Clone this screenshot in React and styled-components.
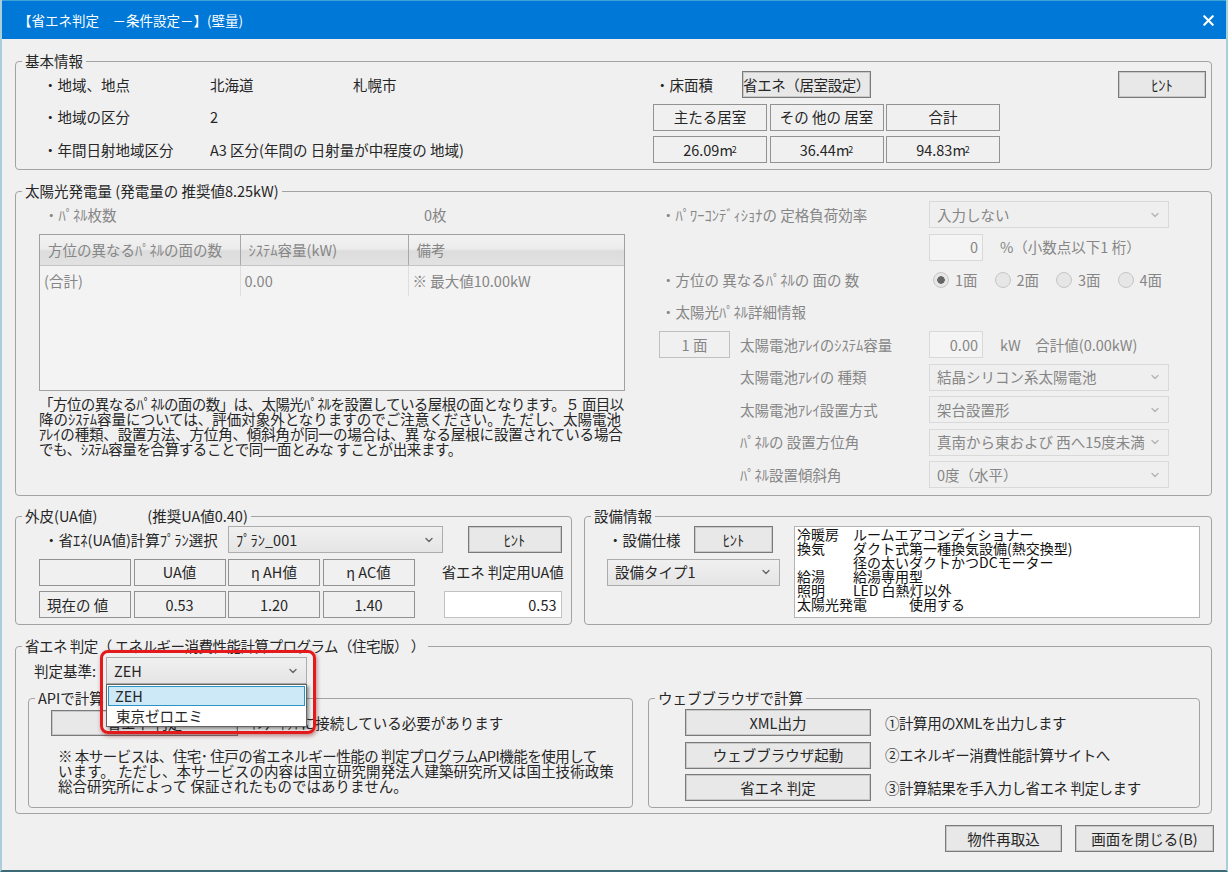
import React from 'react';
import styled, { createGlobalStyle } from 'styled-components';
import { ChevronDown, X } from 'lucide-react';

const GlobalStyle = createGlobalStyle`
	html, body {
		margin: 0;
		padding: 0;
		background: #f0f0f0;
	}
	* {
		box-sizing: border-box;
	}
`;

const Window = styled.div`
	width: 1228px;
	height: 872px;
	overflow: hidden;
	display: flex;
	flex-direction: column;
	background: #f0f0f0;
	color: #262626;
	font-family: 'Noto Sans CJK JP', 'Liberation Sans', sans-serif;
	font-size: 14.5px;
	line-height: 16px;
	border-left: 2px solid #a9d0d8;
	border-right: 2px solid #a9d0d8;
	border-bottom: 2px solid #3b6a75;
`;

const TitleBar = styled.header`
	flex: none;
	height: 39px;
	margin: 0 -2px;
	padding: 0 11px 0 18px;
	display: flex;
	align-items: center;
	justify-content: space-between;
	background: #0078d7;
	border-top: 1px solid #3fa3d8;
	color: #fff;
	font-size: 13.5px;
`;

const Body = styled.main`
	flex: 1;
	padding: 14px 14px 0 13px;
	display: flex;
	flex-direction: column;
`;

const Group = styled.fieldset`
	margin: ${(p) => p.$mt || 0}px 0 0 0;
	padding: 0;
	min-width: 0;
	height: ${(p) => p.$h}px;
	flex: ${(p) => (p.$w ? `0 0 ${p.$w}px` : '1 1 0')};
	border: 1px solid #a3a3a3;
	border-radius: 4px;
	legend {
		margin-left: 6px;
		padding: 0 3px;
		height: 16px;
		white-space: pre;
		color: #262626;
		letter-spacing: ${(p) => p.$ls || 0}px;
	}
`;

const Section = styled(Group)`
	flex: none;
`;

const Row = styled.div`
	display: flex;
	margin-top: ${(p) => p.$mt || 0}px;
	gap: ${(p) => p.$gap || 0}px;
	align-items: ${(p) => p.$align || 'stretch'};
`;

const Basic = styled.div`
	display: flex;
	padding: 2px 5px 0 27px;
`;

const InfoList = styled.div`
	width: 610px;
	display: grid;
	grid-template-columns: 167px 143px 1fr;
	grid-auto-rows: 27px;
	row-gap: 5.5px;
	align-items: center;
	div:nth-child(n + 6) {
		white-space: nowrap;
	}
`;

const AreaPanel = styled.div`
	width: 347px;
	display: grid;
	grid-template-columns: repeat(3, 114px);
	grid-auto-rows: 27px;
	column-gap: 2.5px;
	row-gap: 5.5px;
`;

const AreaHead = styled.div`
	grid-column: 1 / -1;
	display: grid;
	grid-template-columns: 89px 129px;
	align-items: center;
	span {
		margin-left: 2px;
	}
`;

const Cell = styled.div`
	display: flex;
	align-items: center;
	justify-content: ${(p) => (p.$left ? 'flex-start' : 'center')};
	padding: ${(p) => (p.$left ? '0 7px' : '0')};
	width: ${(p) => (p.$w ? `${p.$w}px` : 'auto')};
	height: 27px;
	background: #f0f0f0;
	border: 1px solid ${(p) => (p.$off ? '#c0c0c0' : '#929292')};
	white-space: nowrap;
	sup {
		font-size: 9px;
		line-height: 0;
		margin-left: -1px;
	}
`;

const Button = styled.button`
	flex: none;
	width: ${(p) => p.$w}px;
	height: ${(p) => p.$h || 27}px;
	margin: 0 0 0 ${(p) => p.$ml || 0}px;
	padding: 0;
	background: #e8e8e8;
	border: 1px solid #7a7a7a;
	box-shadow: inset 0 0 0 1px #c8c8c8;
	color: #262626;
	font: inherit;
	letter-spacing: ${(p) => p.$ls || 0}px;
	white-space: nowrap;
`;

const Solar = styled.div`
	display: flex;
	padding: 2px 0 0 23px;
	color: #868686;
`;

const SolarLeft = styled.div`
	width: 586px;
`;

const PanelCount = styled.div`
	height: 27px;
	display: grid;
	grid-template-columns: 380px 1fr;
	align-items: center;
	padding-left: 5px;
	span:last-child {
		white-space: nowrap;
	}
`;

const TableBox = styled.div`
	margin-top: 6px;
	height: 157px;
	background: #f3f3f3;
	border: 1px solid #a0a0a0;
`;

const PanelTable = styled.table`
	width: 100%;
	table-layout: fixed;
	border-collapse: collapse;
	th {
		height: 30px;
		padding: 0 0 0 8px;
		text-align: left;
		font-weight: 400;
		white-space: nowrap;
		background: linear-gradient(#f2f2f2 0%, #ececec 45%, #dcdcdc 55%, #e2e2e2 100%);
		border-right: 1px solid #a8a8a8;
		border-bottom: 1px solid #c4c4c4;
	}
	th:last-child,
	td:last-child {
		border-right: 0;
	}
	td {
		height: 31px;
		padding: 0 0 0 4px;
		white-space: nowrap;
		border-right: 1px solid #dedede;
	}
`;

const Note = styled.p`
	margin: ${(p) => p.$mt || 5}px 0 0 ${(p) => p.$ml || 0}px;
	line-height: 15px;
	color: #262626;
	white-space: nowrap;
`;

const NoteLine = styled.span`
	display: block;
	letter-spacing: ${(p) => p.$ls || 0}px;
`;

const SolarRight = styled.div`
	margin-left: 34px;
	display: grid;
	grid-template-columns: 81px 189px 240px;
	grid-auto-rows: 27px;
	row-gap: 5.5px;
	align-items: center;
`;

const FieldLabel = styled.div`
	grid-column: ${(p) => (p.$wide ? '1 / 3' : '2')};
	padding-left: ${(p) => (p.$wide ? 2 : 0)}px;
	white-space: nowrap;
`;

const Combo = styled.div`
	position: relative;
	display: flex;
	align-items: center;
	justify-content: space-between;
	width: ${(p) => (p.$w ? `${p.$w}px` : 'auto')};
	height: 27px;
	padding: 0 7px 0 7px;
	white-space: nowrap;
	color: ${(p) => (p.$off ? '#868686' : '#262626')};
	background: ${(p) => (p.$off ? '#efefef' : 'linear-gradient(#f0f0f0, #e5e5e5)')};
	border: 1px solid ${(p) => (p.$off ? '#d9d9d9' : '#acacac')};
	svg {
		flex: none;
		color: ${(p) => (p.$off ? '#b5b5b5' : '#666')};
	}
`;

const Input = styled.div`
	flex: none;
	width: ${(p) => p.$w}px;
	height: 27px;
	padding: 0 ${(p) => p.$pr || 4}px 0 0;
	display: flex;
	align-items: center;
	justify-content: flex-end;
	background: ${(p) => (p.$off ? '#f4f4f4' : '#fff')};
	border: 1px solid ${(p) => (p.$off ? '#d9d9d9' : '#c2c2c2')};
	color: ${(p) => (p.$off ? '#868686' : '#262626')};
`;

const InputRow = styled.div`
	display: flex;
	align-items: center;
	gap: 17px;
	white-space: nowrap;
`;

const Radios = styled.div`
	display: grid;
	grid-template-columns: repeat(4, 61.5px);
	padding-left: 4px;
`;

const Radio = styled.span`
	display: flex;
	align-items: center;
	gap: 6px;
	white-space: nowrap;
	&::before {
		content: '';
		flex: none;
		width: 14px;
		height: 14px;
		border-radius: 50%;
		border: 1px solid #c6c6c6;
		background: ${(p) =>
			p.$on ? 'radial-gradient(circle, #666 0 3.5px, #e6e6e6 4px)' : '#e6e6e6'};
	}
`;

const Envelope = styled.div`
	padding: 2px 8px 0 23px;
	display: grid;
	grid-template-columns: 92px 92px 92px 92px 24px 118px;
	grid-template-rows: 27px 27px 27px;
	column-gap: 2.5px;
	row-gap: 5.5px;
	align-items: center;
`;

const Lead = styled.div`
	grid-column: 1 / 3;
	padding-left: 5px;
	white-space: nowrap;
`;

const PlanCombo = styled(Combo)`
	grid-column: 3 / 5;
	margin-right: -28px;
`;

const HintSlot = styled.div`
	grid-column: 5 / 7;
	display: flex;
	justify-content: flex-end;
`;

const JudgeLabel = styled.div`
	grid-column: 5 / 7;
	justify-self: end;
	margin-right: -2px;
	white-space: nowrap;
	letter-spacing: -0.2px;
`;

const InputSlot = styled.div`
	grid-column: 6;
	justify-self: start;
`;

const Equipment = styled.div`
	display: flex;
	padding: 2px 0 0 22px;
	gap: 14px;
`;

const EquipmentLeft = styled.div`
	width: 173px;
	display: flex;
	flex-direction: column;
	gap: 5.5px;
`;

const EquipmentHead = styled.div`
	display: flex;
	align-items: center;
	padding-left: 1px;
	justify-content: space-between;
	margin-right: 7px;
`;

const EquipmentText = styled.div`
	width: 406px;
	height: 92px;
	padding: 0 2px;
	background: #fff;
	border: 1px solid #b4b4b4;
	font-size: 14px;
	line-height: 14px;
	white-space: pre;
	color: #111;
`;

const Judge = styled.div`
	padding: 0 11px 0 12px;
	position: relative;
`;

const JudgeHead = styled.div`
	display: flex;
	align-items: center;
	height: 27px;
	margin-top: 3px;
	padding-left: 6px;
	gap: 10px;
	white-space: nowrap;
`;

const ComboAnchor = styled.div`
	position: relative;
	z-index: 2;
`;

const Highlight = styled.div`
	position: absolute;
	top: -7px;
	left: -6px;
	width: 216px;
	height: 84px;
	border: 3px solid #e3191c;
	border-radius: 8px;
	box-shadow: 1px 2px 4px rgba(120, 0, 0, 0.45);
	pointer-events: none;
`;

const DropList = styled.ul`
	position: absolute;
	top: 27px;
	left: 0;
	width: 201px;
	height: 43px;
	margin: 0;
	padding: 1px;
	list-style: none;
	background: #fff;
	border: 1px solid #646464;
	box-shadow: 2px 2px 3px rgba(0, 0, 0, 0.4);
`;

const DropItem = styled.li`
	height: 20px;
	padding: 0 ${(p) => (p.$active ? 6 : 7)}px;
	line-height: 18px;
	background: ${(p) => (p.$active ? '#cde8f6' : 'transparent')};
	border: 1px solid ${(p) => (p.$active ? '#2a93c8' : 'transparent')};
	white-space: nowrap;
`;

const CalcRow = styled.div`
	display: flex;
	gap: 15px;
	margin-top: 6px;
`;

const ApiBody = styled.div`
	padding: 4px 0 0 22px;
`;

const WebBody = styled.div`
	padding: 3px 0 0 36px;
	display: grid;
	grid-template-columns: 186px 1fr;
	grid-auto-rows: 27px;
	column-gap: 14px;
	row-gap: 5.5px;
	align-items: center;
	span {
		white-space: nowrap;
		letter-spacing: -0.45px;
	}
`;

const Footer = styled.footer`
	display: flex;
	justify-content: flex-end;
	gap: 13px;
	margin: 11px -2px 0 0;
`;

const Chevron = () => <ChevronDown size={12} strokeWidth={2.8} />;

const equipmentText = `冷暖房　ルームエアコンディショナー
換気　　ダクト式第一種換気設備(熱交換型)
　　　　径の太いダクトかつDCモーター
給湯　　給湯専用型
照明　　LED 白熱灯以外
太陽光発電　　　使用する`;

const App = () => {
	return (
		<Window>
			<GlobalStyle />
			<TitleBar>
				<span>【省エネ判定　－条件設定－】(壁量)</span>
				<X size={17} strokeWidth={3} />
			</TitleBar>
			<Body>
				<Section $h={117}>
					<legend>基本情報</legend>
					<Basic>
						<InfoList>
							<div>・地域、地点</div>
							<div>北海道</div>
							<div>札幌市</div>
							<div>・地域の区分</div>
							<div>2</div>
							<div />
							<div>・年間日射地域区分</div>
							<div>A3 区分(年間の 日射量が中程度の 地域)</div>
						</InfoList>
						<AreaPanel>
							<AreaHead>
								<span>・床面積</span>
								<Button $w={129} $ls={-0.4}>省エネ（居室設定）</Button>
							</AreaHead>
							<Cell>主たる居室</Cell>
							<Cell>その 他の 居室</Cell>
							<Cell>合計</Cell>
							<Cell>26.09m<sup>2</sup></Cell>
							<Cell>36.44m<sup>2</sup></Cell>
							<Cell>94.83m<sup>2</sup></Cell>
						</AreaPanel>
						<Button $w={88} $ml={118}>ﾋﾝﾄ</Button>
					</Basic>
				</Section>

				<Section $h={313} $mt={13}>
					<legend>太陽光発電量 (発電量の 推奨値8.25kW)</legend>
					<Solar>
						<SolarLeft>
							<PanelCount>
								<span>・ﾊﾟﾈﾙ枚数</span>
								<span>0枚</span>
							</PanelCount>
							<TableBox>
								<PanelTable>
									<colgroup>
										<col width='200' />
										<col width='168' />
										<col />
									</colgroup>
									<thead>
										<tr>
											<th>方位の異なるﾊﾟﾈﾙの面の数</th>
											<th>ｼｽﾃﾑ容量(kW)</th>
											<th>備考</th>
										</tr>
									</thead>
									<tbody>
										<tr>
											<td>(合計)</td>
											<td>0.00</td>
											<td>※ 最大値10.00kW</td>
										</tr>
									</tbody>
								</PanelTable>
							</TableBox>
							<Note>
								<NoteLine $ls={-0.56}>「方位の異なるﾊﾟﾈﾙの面の数」は、太陽光ﾊﾟﾈﾙを設置している屋根の面となります。５ 面目以</NoteLine>
								<NoteLine>降のｼｽﾃﾑ容量については、評価対象外となりますのでご注意ください。た だし、太陽電池</NoteLine>
								<NoteLine $ls={-0.15}>ｱﾚｲの種類、設置方法、方位角、傾斜角が同一の場合は、異 なる屋根に設置されている場合</NoteLine>
								<NoteLine $ls={-0.4}>でも、ｼｽﾃﾑ容量を合算することで同一面とみな すことが出来ます。</NoteLine>
							</Note>
						</SolarLeft>
						<SolarRight>
							<FieldLabel $wide>・ﾊﾟﾜｰｺﾝﾃﾞｨｼｮﾅの 定格負荷効率</FieldLabel>
							<Combo $off>入力しない<Chevron /></Combo>

							<FieldLabel $wide />
							<InputRow>
								<Input $off $w={54}>0</Input>
								<span>%（小数点以下1 桁）</span>
							</InputRow>

							<FieldLabel $wide>・方位の 異なるﾊﾟﾈﾙの 面の 数</FieldLabel>
							<Radios>
								<Radio $on>1面</Radio>
								<Radio>2面</Radio>
								<Radio>3面</Radio>
								<Radio>4面</Radio>
							</Radios>

							<FieldLabel $wide>・太陽光ﾊﾟﾈﾙ詳細情報</FieldLabel>
							<div />

							<Cell $off $w={71}>1 面</Cell>
							<FieldLabel>太陽電池ｱﾚｲのｼｽﾃﾑ容量</FieldLabel>
							<InputRow>
								<Input $off $w={54}>0.00</Input>
								<span>kW　合計値(0.00kW)</span>
							</InputRow>

							<FieldLabel>太陽電池ｱﾚｲの 種類</FieldLabel>
							<Combo $off>結晶シリコン系太陽電池<Chevron /></Combo>

							<FieldLabel>太陽電池ｱﾚｲ設置方式</FieldLabel>
							<Combo $off>架台設置形<Chevron /></Combo>

							<FieldLabel>ﾊﾟﾈﾙの 設置方位角</FieldLabel>
							<Combo $off>真南から東および 西へ15度未満<Chevron /></Combo>

							<FieldLabel>ﾊﾟﾈﾙ設置傾斜角</FieldLabel>
							<Combo $off>0度（水平）<Chevron /></Combo>
						</SolarRight>
					</Solar>
				</Section>

				<Row $mt={12} $gap={12}>
					<Group $w={557} $h={117}>
						<legend>外皮(UA値)　　　  (推奨UA値0.40)</legend>
						<Envelope>
							<Lead>・省ｴﾈ(UA値)計算ﾌﾟﾗﾝ選択</Lead>
							<PlanCombo>ﾌﾟﾗﾝ_001<Chevron /></PlanCombo>
							<HintSlot>
								<Button $w={94}>ﾋﾝﾄ</Button>
							</HintSlot>
							<Cell />
							<Cell>UA値</Cell>
							<Cell>η AH値</Cell>
							<Cell>η AC値</Cell>
							<JudgeLabel>省エネ 判定用UA値</JudgeLabel>
							<Cell $left>現在の 値</Cell>
							<Cell>0.53</Cell>
							<Cell>1.20</Cell>
							<Cell>1.40</Cell>
							<div />
							<InputSlot>
								<Input $w={118}>0.53</Input>
							</InputSlot>
						</Envelope>
					</Group>
					<Group $h={117}>
						<legend>設備情報</legend>
						<Equipment>
							<EquipmentLeft>
								<EquipmentHead>
									<span>・設備仕様</span>
									<Button $w={79}>ﾋﾝﾄ</Button>
								</EquipmentHead>
								<Combo>設備タイプ1<Chevron /></Combo>
							</EquipmentLeft>
							<EquipmentText>{equipmentText}</EquipmentText>
						</Equipment>
					</Group>
				</Row>

				<Section $h={176} $mt={13} $ls={-0.5}>
					<legend>省エネ 判定（ エネルギー消費性能計算プログラム（住宅版） ）</legend>
					<Judge>
						<JudgeHead>
							<span>判定基準:</span>
							<ComboAnchor>
								<Combo $w={201}>
									ZEH
									<Chevron />
								</Combo>
								<DropList>
									<DropItem $active>ZEH</DropItem>
									<DropItem>東京ゼロエミ</DropItem>
								</DropList>
								<Highlight />
							</ComboAnchor>
						</JudgeHead>
						<CalcRow>
							<Group $w={605} $h={118}>
								<legend>APIで計算</legend>
								<ApiBody>
									<Row $align='center' $gap={12}>
										<Button $w={187} $h={26}>省エネ 判定</Button>
										<span>ｲﾝﾀｰﾈｯﾄに接続している必要があります</span>
									</Row>
									<Note $mt={12} $ml={7}>
										<NoteLine $ls={-0.5}>※ 本サービスは、住宅･ 住戸の省エネルギー性能の 判定プログラムAPI機能を使用して</NoteLine>
										<NoteLine $ls={0.08}>います。 ただし、本サービスの内容は国立研究開発法人建築研究所又は国土技術政策</NoteLine>
										<NoteLine>総合研究所によって 保証されたものではありません。</NoteLine>
									</Note>
								</ApiBody>
							</Group>
							<Group $h={118}>
								<legend>ウェブブラウザで計算</legend>
								<WebBody>
									<Button $w={186}>XML出力</Button>
									<span>①計算用のXMLを出力します</span>
									<Button $w={186}>ウェブブラウザ起動</Button>
									<span>②エネルギー消費性能計算サイトへ</span>
									<Button $w={186}>省エネ 判定</Button>
									<span>③計算結果を手入力し省エネ 判定します</span>
								</WebBody>
							</Group>
						</CalcRow>
					</Judge>
				</Section>

				<Footer>
					<Button $w={117}>物件再取込</Button>
					<Button $w={139}>画面を閉じる(B)</Button>
				</Footer>
			</Body>
		</Window>
	);
};

export default App;
